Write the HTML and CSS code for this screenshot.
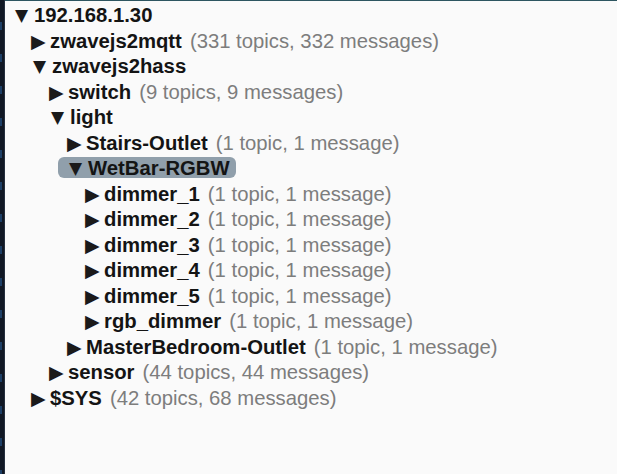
FILE: index.html
```html
<!DOCTYPE html>
<html lang="en">
<head>
  <meta charset="UTF-8">
  <title>Topic Tree</title>
  <link rel="stylesheet" href="styles.css">
</head>
<body>
  <div class="app">
    <aside class="gutter"></aside>
    <main class="tree">
      <div class="node open">
        <div class="row"><span class="arrow">▼</span><span class="name">192.168.1.30</span></div>
        <div class="children">
          <div class="node">
            <div class="row"><span class="arrow">▶</span><span class="name">zwavejs2mqtt</span><span class="count">(331 topics, 332 messages)</span></div>
          </div>
          <div class="node open">
            <div class="row"><span class="arrow">▼</span><span class="name">zwavejs2hass</span></div>
            <div class="children">
              <div class="node">
                <div class="row"><span class="arrow">▶</span><span class="name">switch</span><span class="count">(9 topics, 9 messages)</span></div>
              </div>
              <div class="node open">
                <div class="row"><span class="arrow">▼</span><span class="name">light</span></div>
                <div class="children">
                  <div class="node">
                    <div class="row"><span class="arrow">▶</span><span class="name">Stairs-Outlet</span><span class="count">(1 topic, 1 message)</span></div>
                  </div>
                  <div class="node open">
                    <div class="row selected"><span class="arrow">▼</span><span class="name">WetBar-RGBW</span></div>
                    <div class="children">
                      <div class="node"><div class="row"><span class="arrow">▶</span><span class="name">dimmer_1</span><span class="count">(1 topic, 1 message)</span></div></div>
                      <div class="node"><div class="row"><span class="arrow">▶</span><span class="name">dimmer_2</span><span class="count">(1 topic, 1 message)</span></div></div>
                      <div class="node"><div class="row"><span class="arrow">▶</span><span class="name">dimmer_3</span><span class="count">(1 topic, 1 message)</span></div></div>
                      <div class="node"><div class="row"><span class="arrow">▶</span><span class="name">dimmer_4</span><span class="count">(1 topic, 1 message)</span></div></div>
                      <div class="node"><div class="row"><span class="arrow">▶</span><span class="name">dimmer_5</span><span class="count">(1 topic, 1 message)</span></div></div>
                      <div class="node"><div class="row"><span class="arrow">▶</span><span class="name">rgb_dimmer</span><span class="count">(1 topic, 1 message)</span></div></div>
                    </div>
                  </div>
                  <div class="node">
                    <div class="row"><span class="arrow">▶</span><span class="name">MasterBedroom-Outlet</span><span class="count">(1 topic, 1 message)</span></div>
                  </div>
                </div>
              </div>
              <div class="node">
                <div class="row"><span class="arrow">▶</span><span class="name">sensor</span><span class="count">(44 topics, 44 messages)</span></div>
              </div>
            </div>
          </div>
          <div class="node">
            <div class="row"><span class="arrow">▶</span><span class="name">$SYS</span><span class="count">(42 topics, 68 messages)</span></div>
          </div>
        </div>
      </div>
    </main>
  </div>
</body>
</html>
```

FILE: styles.css
```css
html, body {
  margin: 0;
  padding: 0;
  height: 100%;
}
body {
  font-family: "Liberation Sans", Arial, sans-serif;
  background: #fafafa;
  overflow: hidden;
}
.app {
  display: flex;
  height: 100%;
}

/* dark edge of the neighbouring panel */
.gutter {
  width: 4px;
  flex: none;
  background:
    repeating-linear-gradient(to bottom, transparent 0 22px, #1d3f66 22px 30px, transparent 30px 32px) 0 0 / 2px 100% no-repeat,
    #111824;
  border-right: 1px solid #252f3e;
}

.tree {
  flex: 1;
  border-top: 1px solid #2d5560;
  padding: 2px 0 0 8px;
  font-size: 20.3px;
  line-height: 25.5px;
}
.children {
  padding-left: 18px;
}
.row {
  display: flex;
  align-items: center;
  width: max-content;
  white-space: nowrap;
  border-radius: 6px;
}
.row.selected {
  background: #909fab;
  line-height: 19px;
  margin: 1px 0 3.5px -9px;
  padding: 2px 6px 0 9px;
}
.arrow {
  font-family: "DejaVu Sans", sans-serif;
  font-size: 19px;
  color: #1a1a1a;
  width: 19px;
  flex: none;
}
.open > .row > .arrow {
  font-size: 17px;
  margin-left: 2px;
}
.name {
  font-weight: bold;
  color: #141414;
}
.count {
  color: #7d7d7d;
  margin-left: 8px;
}
```
